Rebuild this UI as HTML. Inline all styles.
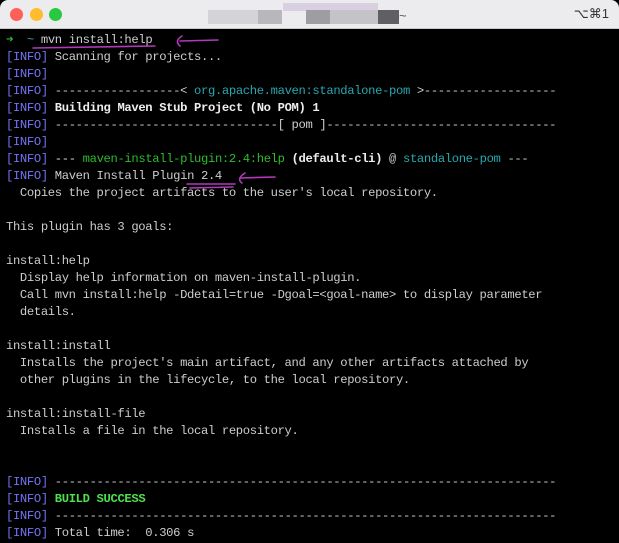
<!DOCTYPE html>
<html><head><meta charset="utf-8"><style>
*{margin:0;padding:0;box-sizing:border-box}
body{width:619px;height:543px;background:#000;overflow:hidden;position:relative;font-family:"Liberation Mono",monospace}
.tb{position:absolute;left:0;top:0;width:619px;height:29px;background:#ececef;border-bottom:1px solid #c8c8c8;border-radius:8px 8px 0 0}
.dot{position:absolute;top:8px;width:13px;height:13px;border-radius:50%}
.blk{position:absolute}
.kb{position:absolute;right:10px;top:6px;font:13px "Liberation Sans",sans-serif;color:#333}
.term{position:absolute;left:6px;top:32px;font-size:12.2px;letter-spacing:-0.35px;line-height:17px;color:#cdcdcd;white-space:pre}
.i{color:#7272f4}.g{color:#2fbb2f}.c{color:#27a8b0}.w{color:#eee;font-weight:bold}.s{color:#4ee04e;font-weight:bold}
svg{position:absolute;left:0;top:0}
</style></head><body>
<div class="tb">
<div class="dot" style="left:10px;background:#fe5f57"></div>
<div class="dot" style="left:30px;background:#febc2e"></div>
<div class="dot" style="left:49px;background:#28c840"></div>
<div class="blk" style="left:208px;top:10px;width:70px;height:14px;background:#d4d4d8"></div>
<div class="blk" style="left:258px;top:10px;width:24px;height:14px;background:#b8b8bc"></div>
<div class="blk" style="left:283px;top:3px;width:95px;height:8px;background:#d8d0e0"></div>
<div class="blk" style="left:306px;top:10px;width:24px;height:14px;background:#9e9ea2"></div>
<div class="blk" style="left:330px;top:10px;width:48px;height:14px;background:#c4c4c8"></div>
<div class="blk" style="left:378px;top:10px;width:21px;height:14px;background:#606064"></div>
<div class="blk" style="left:399px;top:8px;font:13px sans-serif;color:#555">~</div>
<div class="kb">⌥⌘1</div>
</div>
<div class="term"><span class="g">➜</span>  <span class="c">~</span> mvn install:help
<span class="i">[INFO]</span> Scanning for projects...
<span class="i">[INFO]</span>
<span class="i">[INFO]</span> ------------------&lt; <span class="c">org.apache.maven:standalone-pom</span> &gt;-------------------
<span class="i">[INFO]</span> <span class="w">Building Maven Stub Project (No POM) 1</span>
<span class="i">[INFO]</span> --------------------------------[ pom ]---------------------------------
<span class="i">[INFO]</span>
<span class="i">[INFO]</span> <span class="w" style="font-weight:normal;color:#ddd">---</span> <span class="g">maven-install-plugin:2.4:help</span> <span class="w">(default-cli)</span> @ <span class="c">standalone-pom</span> ---
<span class="i">[INFO]</span> Maven Install Plugin 2.4
  Copies the project artifacts to the user's local repository.

This plugin has 3 goals:

install:help
  Display help information on maven-install-plugin.
  Call mvn install:help -Ddetail=true -Dgoal=&lt;goal-name&gt; to display parameter
  details.

install:install
  Installs the project's main artifact, and any other artifacts attached by
  other plugins in the lifecycle, to the local repository.

install:install-file
  Installs a file in the local repository.


<span class="i">[INFO]</span> ------------------------------------------------------------------------
<span class="i">[INFO]</span> <span class="s">BUILD SUCCESS</span>
<span class="i">[INFO]</span> ------------------------------------------------------------------------
<span class="i">[INFO]</span> Total time:  0.306 s</div>
<svg width="619" height="543" fill="none" stroke="#b03ab8" stroke-width="1.6" stroke-linecap="round">
<path d="M33 48 Q90 47 155 46"/>
<path d="M218 40 L180 41"/><path d="M182 36 Q174 41 180 46"/>
<path d="M187 184 L235 184"/><path d="M190 188 L233 187"/>
<path d="M275 177 L240 178"/><path d="M245 173 Q236 179 242 183"/>
</svg>
</body></html>
